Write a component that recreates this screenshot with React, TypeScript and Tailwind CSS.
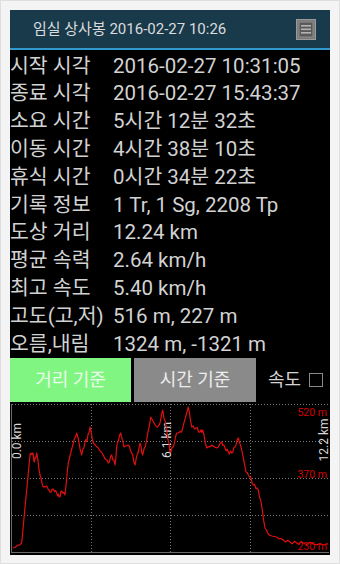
import React from "react";

const FONT = { fontFamily: "Roboto, 'Noto Sans CJK KR', 'Noto Sans', sans-serif" };

const ROWS: [string, string][] = [
  ["시작 시각", "2016-02-27 10:31:05"],
  ["종료 시각", "2016-02-27 15:43:37"],
  ["소요 시간", "5시간 12분 32초"],
  ["이동 시간", "4시간 38분 10초"],
  ["휴식 시간", "0시간 34분 22초"],
  ["기록 정보", "1 Tr, 1 Sg, 2208 Tp"],
  ["도상 거리", "12.24 km"],
  ["평균 속력", "2.64 km/h"],
  ["최고 속도", "5.40 km/h"],
  ["고도(고,저)", "516 m, 227 m"],
  ["오름,내림", "1324 m, -1321 m"],
];

// elevation profile, page coords sampled from the screenshot
const RAW: [number, number][] = [
  [12.7, 548], [20, 545], [21.7, 543], [30, 455], [32.7, 453], [34.3, 462], [36.7, 453],
  [40, 475], [43.3, 487], [46.7, 486], [50, 492], [53.3, 489], [56.7, 493], [59.3, 497],
  [61.7, 491], [65, 495], [68.3, 463], [73.3, 443], [76.7, 433], [81.7, 455], [85, 442],
  [87.3, 439], [90, 427], [93.3, 443], [98.3, 448], [103.3, 455], [108.3, 463], [111.7, 455],
  [115, 465], [117.3, 443], [120.7, 433], [124, 447], [128.3, 445], [131.7, 453], [135, 465],
  [140, 443], [142.7, 455], [146.7, 440], [150.7, 417], [156.7, 427], [159.3, 425], [162.7, 410],
  [166.7, 430], [170, 452], [173.3, 447], [176.7, 433], [181.7, 432], [188.3, 407], [191.7, 427],
  [196, 428], [200, 432], [202.7, 430], [206.7, 448], [211.7, 445], [216.7, 448], [221.7, 442],
  [225, 448], [228.3, 452], [231.7, 453], [235, 447], [238.3, 438], [241.7, 450], [246, 472],
  [250, 477], [253.3, 485], [257.3, 488], [260.7, 500], [265, 528], [269.3, 535], [276.7, 537],
  [283.3, 540], [290, 542], [296.7, 543], [303.3, 543], [313.3, 544], [323.3, 545], [328.3, 544],
];

function profilePoints() {
  const out: string[] = [];
  for (let i = 0; i < RAW.length; i++) {
    const [x, y] = RAW[i];
    out.push(`${(x - 10).toFixed(1)},${(y - 404).toFixed(1)}`);
    const next = RAW[i + 1];
    if (!next) break;
    for (let k = 1; k < 3; k++) {
      const t = k / 3;
      const jx = x + (next[0] - x) * t;
      const jy = y + (next[1] - y) * t + Math.sin(i * 12.9898 + k * 78.233) * 1.6;
      out.push(`${(jx - 10).toFixed(1)},${(jy - 404).toFixed(1)}`);
    }
  }
  return out.join(" ");
}

function MenuIcon() {
  return (
    <svg width="20" height="21" viewBox="0 0 20 21">
      <rect x="0.5" y="0.5" width="19" height="20" fill="#7a7a7a" stroke="#9a9a9a" />
      <rect x="3" y="3" width="14" height="15" fill="#5a5a5a" stroke="#8c8c8c" />
      <rect x="5" y="6" width="10" height="1.6" fill="#b4b4b4" />
      <rect x="5" y="9.5" width="10" height="1.6" fill="#b4b4b4" />
      <rect x="5" y="13" width="10" height="1.6" fill="#b4b4b4" />
    </svg>
  );
}

function Chart() {
  const grid = "#7a7a7a";
  return (
    <svg width="320" height="149" viewBox="0 0 320 149" className="block">
      <rect x="0" y="0" width="320" height="149" fill="#000" />
      {[0, 37, 74, 111].map((y) => (
        <line key={y} x1="2" x2="319" y1={y + 0.5} y2={y + 0.5} stroke={grid} strokeWidth="1" strokeDasharray="1 2" />
      ))}
      {[81, 160, 240].map((x) => (
        <line key={x} x1={x + 0.5} x2={x + 0.5} y1="0" y2="148" stroke={grid} strokeWidth="1" strokeDasharray="1 2" />
      ))}
      <line x1="1.5" x2="1.5" y1="0" y2="149" stroke="#6a6a6a" strokeWidth="1" />
      <line x1="1" x2="319" y1="148.5" y2="148.5" stroke="#6a6a6a" strokeWidth="1" />
      <g fill="#d8d8d8" fontSize="12" style={FONT}>
        <text transform="translate(11 37) rotate(-90)" textAnchor="middle">0.0 km</text>
        <text transform="translate(161 36) rotate(-90)" textAnchor="middle">6.1 km</text>
        <text transform="translate(318 36) rotate(-90)" textAnchor="middle">12.2 km</text>
      </g>
      <polyline points={profilePoints()} fill="none" stroke="#e01010" strokeWidth="1.2" strokeLinejoin="round" />
      <g fill="#d40000" fontSize="10.5" textAnchor="end" style={FONT}>
        <text x="317" y="12">520 m</text>
        <text x="317" y="74">370 m</text>
        <text x="317" y="146">230 m</text>
      </g>
    </svg>
  );
}

export default function App() {
  return (
    <div className="h-[564px] w-[340px] border border-[#dedede] bg-[#f4f4f4] p-[9px]" style={FONT}>
      <div className="flex h-[545px] w-[320px] flex-col bg-black">
        <div className="flex h-[38px] items-center justify-between bg-[#183a4b] pl-[23px] pr-[14px]">
          <span className="text-[15px] text-[#dcdcdc]">임실 상사봉 2016-02-27 10:26</span>
          <MenuIcon />
        </div>
        <div className="h-[2px] bg-[#3399cc]" />
        <div className="flex flex-col pt-[2px]">
          {ROWS.map(([label, value]) => (
            <div key={label} className="flex h-[27.8px] items-center text-[20.5px] leading-none text-[#d2d2d2]">
              <span className="w-[103px] shrink-0 whitespace-nowrap">{label}</span>
              <span className="whitespace-nowrap">{value}</span>
            </div>
          ))}
        </div>
        <div className="flex h-[44px] items-stretch">
          <div className="flex w-[121px] items-center justify-center bg-[#80f582] text-[18px] text-[#eaffea]">
            거리 기준
          </div>
          <div className="ml-[3px] flex w-[122px] items-center justify-center bg-[#8a8a8a] text-[18px] text-[#ececec]">
            시간 기준
          </div>
          <div className="flex flex-1 items-center justify-end gap-[8px] pr-[7px] text-[18px] text-[#d4d4d4]">
            <span>속도</span>
            <span className="block h-[14px] w-[14px] border-[1.5px] border-[#8a8a8a]" />
          </div>
        </div>
        <div className="mt-[2px]">
          <Chart />
        </div>
      </div>
    </div>
  );
}
